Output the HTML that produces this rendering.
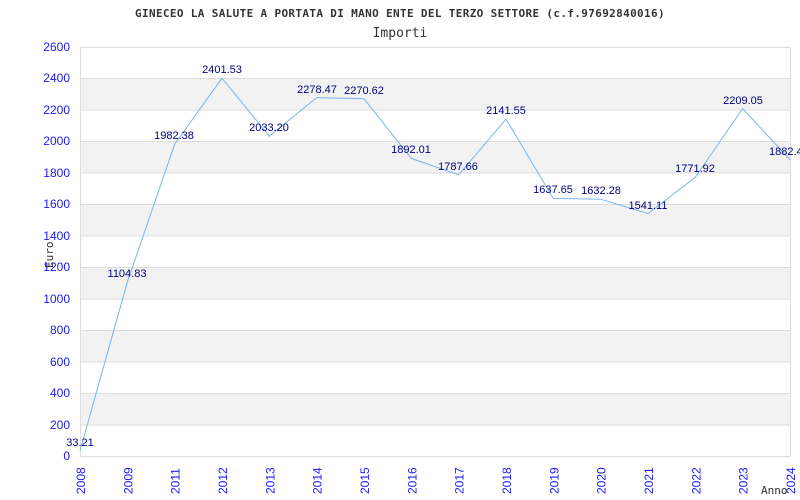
<!DOCTYPE html>
<html><head><style>body{margin:0;background:#fff}svg{display:block}</style></head><body>
<svg width="800" height="500" xmlns="http://www.w3.org/2000/svg">
<text x="400" y="17" text-anchor="middle" font-family="DejaVu Sans Mono, Liberation Mono, monospace" font-size="11" font-weight="bold" letter-spacing="0.35" fill="#333">GINECEO LA SALUTE A PORTATA DI MANO ENTE DEL TERZO SETTORE (c.f.97692840016)</text>
<text x="400" y="37" text-anchor="middle" font-family="DejaVu Sans Mono, Liberation Mono, monospace" font-size="13" fill="#333">Importi</text>
<g fill="#f2f2f2">
<rect x="80" y="78.5" width="710" height="31.5"/><rect x="80" y="141.5" width="710" height="31.5"/><rect x="80" y="204.5" width="710" height="31.5"/><rect x="80" y="267.5" width="710" height="31.5"/><rect x="80" y="330.5" width="710" height="31.5"/><rect x="80" y="393.5" width="710" height="31.5"/>
</g>
<g stroke="#ddd" stroke-width="1">
<line x1="80" y1="78.5" x2="790" y2="78.5"/><line x1="80" y1="110" x2="790" y2="110"/><line x1="80" y1="141.5" x2="790" y2="141.5"/><line x1="80" y1="173" x2="790" y2="173"/><line x1="80" y1="204.5" x2="790" y2="204.5"/><line x1="80" y1="236" x2="790" y2="236"/><line x1="80" y1="267.5" x2="790" y2="267.5"/><line x1="80" y1="299" x2="790" y2="299"/><line x1="80" y1="330.5" x2="790" y2="330.5"/><line x1="80" y1="362" x2="790" y2="362"/><line x1="80" y1="393.5" x2="790" y2="393.5"/><line x1="80" y1="425" x2="790" y2="425"/>
</g>
<rect x="80.5" y="47.5" width="710" height="409" fill="none" stroke="#ddd"/>
<g font-family="Liberation Sans, sans-serif" font-size="12" fill="#1a1aff" text-anchor="end">
<text x="70" y="51">2600</text><text x="70" y="82">2400</text><text x="70" y="114">2200</text><text x="70" y="145">2000</text><text x="70" y="177">1800</text><text x="70" y="208">1600</text><text x="70" y="240">1400</text><text x="70" y="271">1200</text><text x="70" y="303">1000</text><text x="70" y="334">800</text><text x="70" y="366">600</text><text x="70" y="397">400</text><text x="70" y="429">200</text><text x="70" y="460">0</text>
</g>
<g font-family="Liberation Sans, sans-serif" font-size="12" fill="#1a1aff">
<text transform="translate(85,494) rotate(-90)">2008</text>
<text transform="translate(132.3,494) rotate(-90)">2009</text>
<text transform="translate(179.7,494) rotate(-90)">2011</text>
<text transform="translate(227,494) rotate(-90)">2012</text>
<text transform="translate(274.3,494) rotate(-90)">2013</text>
<text transform="translate(321.7,494) rotate(-90)">2014</text>
<text transform="translate(369,494) rotate(-90)">2015</text>
<text transform="translate(416.3,494) rotate(-90)">2016</text>
<text transform="translate(463.7,494) rotate(-90)">2017</text>
<text transform="translate(511,494) rotate(-90)">2018</text>
<text transform="translate(558.3,494) rotate(-90)">2019</text>
<text transform="translate(605.7,494) rotate(-90)">2020</text>
<text transform="translate(653,494) rotate(-90)">2021</text>
<text transform="translate(700.3,494) rotate(-90)">2022</text>
<text transform="translate(747.7,494) rotate(-90)">2023</text>
<text transform="translate(795,494) rotate(-90)">2024</text>
</g>
<text x="761" y="494" font-family="DejaVu Sans Mono, monospace" font-size="11" fill="#333">Anno</text>
<text transform="translate(53,268) rotate(-90)" font-family="DejaVu Sans Mono, monospace" font-size="11" fill="#333">Euro</text>
<polyline fill="none" stroke="#7ab4f0" stroke-width="1" points="80,450.8 127.3,282.2 174.7,144.1 222,78.2 269.3,136.2 316.7,97.6 364,98.8 411.3,158.4 458.7,174.8 506,119.1 553.3,198.4 600.7,199.2 648,213.6 695.3,177.3 742.7,108.5 790,159.9"/>
<g font-family="Liberation Sans, sans-serif" font-size="11" fill="#000080" text-anchor="middle">
<text x="80" y="446">33.21</text>
<text x="127" y="277">1104.83</text>
<text x="174" y="139">1982.38</text>
<text x="222" y="73">2401.53</text>
<text x="269" y="131">2033.20</text>
<text x="317" y="93">2278.47</text>
<text x="364" y="94">2270.62</text>
<text x="411" y="153">1892.01</text>
<text x="458" y="170">1787.66</text>
<text x="506" y="114">2141.55</text>
<text x="553" y="193">1637.65</text>
<text x="601" y="194">1632.28</text>
<text x="648" y="209">1541.11</text>
<text x="695" y="172">1771.92</text>
<text x="743" y="104">2209.05</text>
<text x="769" y="155" text-anchor="start">1882.4</text>
</g>
</svg>
</body></html>
